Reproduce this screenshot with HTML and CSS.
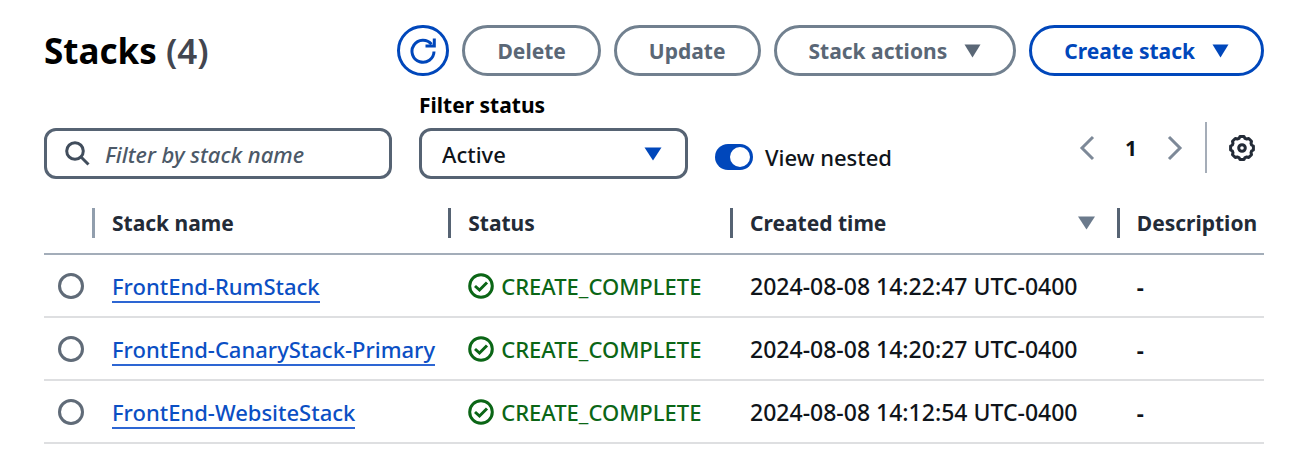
FILE: index.html
```html
<!DOCTYPE html>
<html lang="en">
<head>
<meta charset="utf-8">
<title>Stacks</title>
<meta name="viewport" content="width=device-width, initial-scale=1">
<link rel="stylesheet" href="styles.css">
</head>
<body>
<main class="panel">
  <header class="header">
    <h1 class="title">Stacks <span class="count">(4)</span></h1>
    <div class="actions">
      <button class="btn btn-icon" type="button" aria-label="Refresh">
        <svg width="26" height="26" viewBox="0 0 26 26" fill="none" stroke="currentColor" stroke-width="3"><path d="M24 13.500A11 11 0 1 1 21.500 6.300"/><path d="M24.300 0.500V8H15.500"/></svg>
      </button>
      <button class="btn btn-muted" type="button">Delete</button>
      <button class="btn btn-muted" type="button">Update</button>
      <button class="btn btn-muted btn-menu" type="button">Stack actions
        <svg width="17" height="14" viewBox="0 0 17 14" fill="currentColor"><path d="M0.500 0.500h16L8.500 13.500z"/></svg>
      </button>
      <button class="btn btn-menu" type="button">Create stack
        <svg width="17" height="14" viewBox="0 0 17 14" fill="currentColor"><path d="M0.500 0.500h16L8.500 13.500z"/></svg>
      </button>
    </div>
  </header>

  <div class="filters">
    <div class="field search">
      <svg width="25" height="25" viewBox="0 0 25 25" fill="none" stroke="currentColor" stroke-width="3"><circle cx="10" cy="10" r="8.300"/><path d="M15.800 15.800L23.500 23.500"/></svg>
      <input class="search-input" type="text" placeholder="Filter by stack name" aria-label="Filter by stack name">
    </div>
    <div class="status-filter">
      <label class="status-label" for="status">Filter status</label>
      <div class="select-wrap">
        <select class="field select" id="status"><option>Active</option><option>Deleted</option></select>
        <svg class="select-arrow" width="18" height="14" viewBox="0 0 18 14" fill="currentColor"><path d="M0.500 0.500h17L9 13.500z"/></svg>
      </div>
    </div>
    <label class="nested"><input class="toggle" type="checkbox" role="switch" checked>View nested</label>
    <div class="pager">
      <button class="page-btn" type="button" aria-label="Previous page"><svg width="16" height="26" viewBox="0 0 16 26" fill="none" stroke="currentColor" stroke-width="3"><path d="M14 2L3 13L14 24"/></svg></button>
      <button class="page-btn page-current" type="button">1</button>
      <button class="page-btn" type="button" aria-label="Next page"><svg width="16" height="26" viewBox="0 0 16 26" fill="none" stroke="currentColor" stroke-width="3"><path d="M2 2L13 13L2 24"/></svg></button>
      <button class="page-btn settings" type="button" aria-label="Preferences">
        <svg width="26" height="26" viewBox="-13 -13 26 26" fill="none" stroke="currentColor" stroke-width="3" stroke-linejoin="round"><path d="M11.400 2L9.600 3L9 4.700L9.500 6.700L6.700 9.500L4.700 9L3 9.600L2 11.400L-2 11.400L-3 9.600L-4.700 9L-6.700 9.500L-9.500 6.700L-9 4.700L-9.600 3L-11.400 2L-11.400 -2L-9.600 -3L-9 -4.700L-9.500 -6.700L-6.700 -9.500L-4.700 -9L-3 -9.600L-2 -11.400L2 -11.400L3 -9.600L4.700 -9L6.700 -9.500L9.500 -6.700L9 -4.700L9.600 -3L11.400 -2Z"/><circle r="3.300"/></svg>
      </button>
    </div>
  </div>

  <table class="stacks">
    <colgroup><col class="col-pick"><col class="col-name"><col class="col-status"><col class="col-time"><col></colgroup>
    <thead>
      <tr>
        <th class="pick" aria-label="Selection"><div class="head head-light"></div></th>
        <th><div class="head">Stack name</div></th>
        <th><div class="head">Status</div></th>
        <th><div class="head head-sort">Created time <svg width="17" height="14" viewBox="0 0 17 14" fill="currentColor"><path d="M0 0.500h17L8.500 13.500z"/></svg></div></th>
        <th><div class="head head-last">Description</div></th>
      </tr>
    </thead>
    <tbody>
      <tr>
        <td class="pick"><input class="radio" type="radio" name="stack" aria-label="Select FrontEnd-RumStack"></td>
        <td><a class="link" href="#">FrontEnd-RumStack</a></td>
        <td><span class="status"><svg width="26" height="26" viewBox="0 0 26 26" fill="none" stroke="currentColor" stroke-width="3"><circle cx="13" cy="13" r="11.300"/><path d="M7 13L11.500 17L19 9.500"/></svg>CREATE_COMPLETE</span></td>
        <td class="time">2024-08-08 14:22:47 UTC-0400</td>
        <td class="desc">-</td>
      </tr>
      <tr>
        <td class="pick"><input class="radio" type="radio" name="stack" aria-label="Select FrontEnd-CanaryStack-Primary"></td>
        <td><a class="link" href="#">FrontEnd-CanaryStack-Primary</a></td>
        <td><span class="status"><svg width="26" height="26" viewBox="0 0 26 26" fill="none" stroke="currentColor" stroke-width="3"><circle cx="13" cy="13" r="11.300"/><path d="M7 13L11.500 17L19 9.500"/></svg>CREATE_COMPLETE</span></td>
        <td class="time">2024-08-08 14:20:27 UTC-0400</td>
        <td class="desc">-</td>
      </tr>
      <tr>
        <td class="pick"><input class="radio" type="radio" name="stack" aria-label="Select FrontEnd-WebsiteStack"></td>
        <td><a class="link" href="#">FrontEnd-WebsiteStack</a></td>
        <td><span class="status"><svg width="26" height="26" viewBox="0 0 26 26" fill="none" stroke="currentColor" stroke-width="3"><circle cx="13" cy="13" r="11.300"/><path d="M7 13L11.500 17L19 9.500"/></svg>CREATE_COMPLETE</span></td>
        <td class="time">2024-08-08 14:12:54 UTC-0400</td>
        <td class="desc">-</td>
      </tr>
    </tbody>
  </table>
</main>
</body>
</html>
```
FILE: styles.css
```css
* { box-sizing: border-box; }
body {
  margin: 0;
  background: #fff;
  color: #0f141a;
  font: 500 22px/28px "Noto Sans", "Open Sans", sans-serif;
}
button, input, select { font: inherit; color: inherit; margin: 0; }
svg { display: block; flex: none; }
.panel { padding: 25px 38px 0 44px; }

.header { display: flex; align-items: center; justify-content: space-between; }
.title { margin: 0; font-size: 35px; line-height: 40px; font-weight: 700; color: #000; }
.count { color: #424650; font-weight: 600; }
.actions { display: flex; gap: 13px; }
.btn {
  display: flex;
  align-items: center;
  justify-content: center;
  height: 51px;
  padding: 0 32px;
  border: 3px solid #0047bb;
  border-radius: 26px;
  background: #fff;
  color: #0047bb;
  font-size: 21px;
  font-weight: 700;
  white-space: nowrap;
}
.btn-icon { width: 52px; padding: 0; }
.btn-muted { border-color: #71808f; color: #5a6776; }
.btn-menu { gap: 17px; }

.filters { display: flex; align-items: flex-end; padding-top: 15px; }
.field {
  height: 51px;
  border: 3px solid #566373;
  border-radius: 12px;
  background: #fff;
}
.search {
  display: flex;
  align-items: center;
  gap: 15px;
  flex: 0 1 348px;
  min-width: 0;
  padding: 0 18px;
  color: #414d5c;
}
.search-input {
  flex: 1;
  min-width: 0;
  padding: 0;
  border: 0;
  outline: 0;
  background: none;
  font-style: italic;
}
.search-input::placeholder { color: #4c5968; opacity: 1; }
.status-filter { flex: 0 1 269px; margin-left: 27px; }
.status-label { display: block; margin-bottom: 9px; color: #000; font-size: 21px; font-weight: 700; }
.select-wrap { position: relative; }
.select { appearance: none; display: block; width: 100%; padding: 0 20px; color: #0f141a; }
.select-arrow { position: absolute; right: 26px; top: 19px; color: #0047bb; pointer-events: none; }
.nested { display: flex; align-items: center; gap: 12px; height: 44px; margin-left: 27px; white-space: nowrap; }
.toggle {
  appearance: none;
  display: flex;
  justify-content: flex-end;
  width: 38px;
  height: 26px;
  padding: 3px;
  border-radius: 13px;
  background: #0047bb;
}
.toggle::before { content: ""; width: 20px; height: 20px; border-radius: 50%; background: #fff; }
.toggle:not(:checked) { justify-content: flex-start; background: #566373; }
.pager { display: flex; align-items: center; height: 51px; margin: 0 0 6px auto; }
.page-btn {
  display: flex;
  align-items: center;
  justify-content: center;
  width: 44px;
  height: 51px;
  padding: 0;
  border: 0;
  background: none;
  color: #7d8998;
}
.page-current { color: #0f141a; font-weight: 700; font-size: 21px; }
.settings { width: 59px; margin-left: 8px; padding: 0 10px 0 22px; border-left: 2px solid #a5adb8; color: #232b37; }

.stacks { width: 100%; margin-top: 16px; border-collapse: collapse; table-layout: fixed; }
.col-pick { width: 51px; }
.col-name { width: 29.200%; }
.col-status { width: 23.100%; }
.col-time { width: 31.700%; }
th { height: 59px; padding: 0 0 2px; border-bottom: 2px solid #a3adb9; text-align: left; }
.head {
  display: flex;
  align-items: center;
  height: 30px;
  padding-left: 17px;
  border-right: 3px solid #566373;
  color: #232b37;
  font-size: 21px;
  font-weight: 700;
  white-space: nowrap;
}
.head-light { border-color: #919ead; }
.head-last { border-right: 0; }
.head-sort { justify-content: space-between; padding-right: 22px; }
.head-sort svg { color: #6b7a8c; }
td { height: 63px; padding: 0 0 0 17px; border-bottom: 2px solid #dedfe1; white-space: nowrap; }
td.pick { padding-left: 14px; }
.time { font-size: 23px; }
.desc { font-weight: 700; }
.radio {
  appearance: none;
  display: block;
  width: 26px;
  height: 26px;
  border: 3px solid #606b78;
  border-radius: 50%;
  background: #fff;
}
.radio:checked { border: 8px solid #0047bb; }
.link { color: #0b4fc4; text-decoration: none; border-bottom: 2px solid #2d66d3; }
.status { display: flex; align-items: center; gap: 7px; color: #0b6616; }
```
